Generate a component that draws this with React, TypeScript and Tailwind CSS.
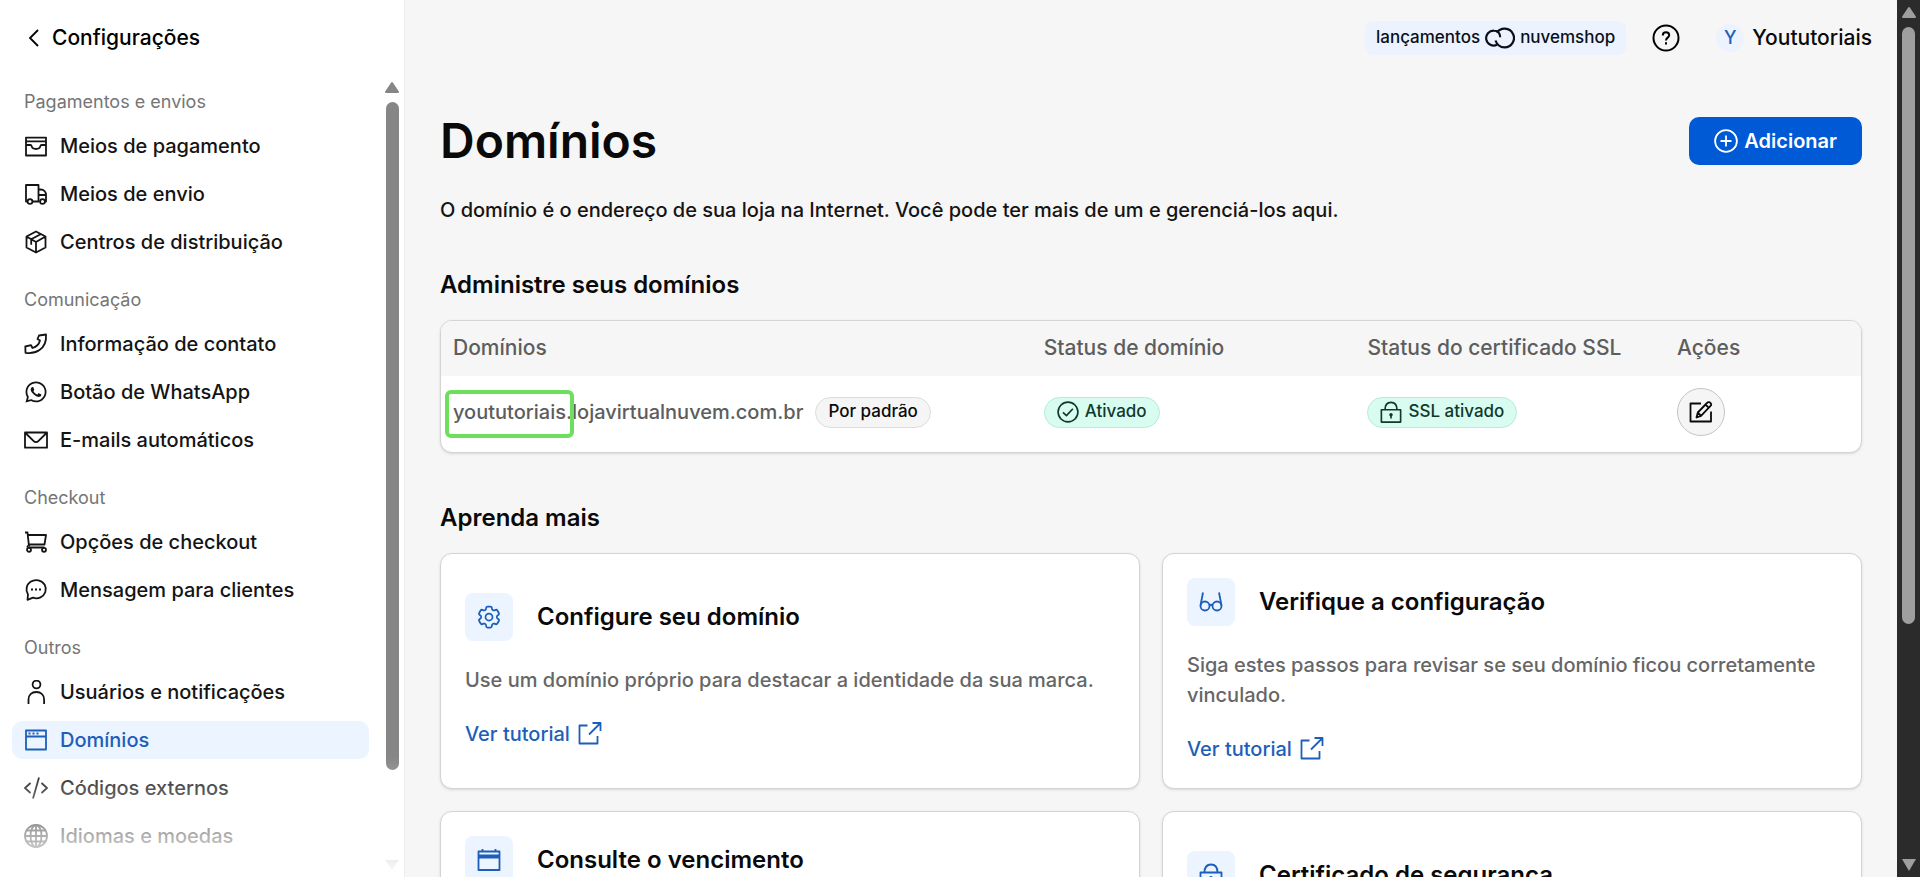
import type { ComponentType, ReactNode } from "react";
import { FaWhatsapp } from "react-icons/fa";
import { HiOutlineCog6Tooth } from "react-icons/hi2";
import clsx from "clsx";

type IconProps = { className?: string };

function Svg({ className = "size-6", children }: IconProps & { children: ReactNode }) {
  return (
    <svg
      viewBox="0 0 24 24"
      fill="none"
      stroke="currentColor"
      strokeWidth={1.8}
      strokeLinejoin="round"
      className={className}
      aria-hidden="true"
    >
      {children}
    </svg>
  );
}

const WalletIcon = (p: IconProps) => (
  <Svg {...p}>
    <path d="M2 21.5V3.6h20v17.9zM2 7.3h20M2 11h4.500c.8 0 1 .6 1.200 1.400.4 1.700 2 2.600 4.300 2.600s3.900-.9 4.300-2.600c.2-.8.4-1.400 1.200-1.400H22" />
  </Svg>
);

const TruckIcon = (p: IconProps) => (
  <Svg {...p}>
    <path d="M3.500 19.500H2V3h12.500v16.500H8.500M14.500 7.500h2c3.500 0 5.500 2.500 5.500 5.500v6.500h-1.500M15.500 19.500h-1M14.500 13H22" />
    <circle cx="6" cy="19.500" r="2.400" />
    <circle cx="18.500" cy="19.500" r="2.400" />
  </Svg>
);

const BoxIcon = (p: IconProps) => (
  <Svg {...p}>
    <path d="M12 1.500l9.500 5v11L12 22.500l-9.500-5v-11zM2.500 6.500L12 12l9.500-5.500M12 12v10.500M17 4L7.200 9.300v5.500" />
  </Svg>
);

const PhoneIcon = (p: IconProps) => (
  <Svg {...p}>
    <path d="M15 3.500L22 2.500c.6 7.500-2 12.500-6.500 15.500-4 2.800-8.500 3.500-14 2.800l-.2-6.300 5.700-1.300 1.500 2.800c3.500-1 6.500-3.500 7.500-7.500L13.500 7z" />
  </Svg>
);

const MailIcon = (p: IconProps) => (
  <Svg {...p}>
    <path d="M1 4.500h22v15.200H1zM1.500 5l8.200 8.200c1.300 1.300 3.300 1.300 4.600 0L22.500 5" />
  </Svg>
);

const CartIcon = (p: IconProps) => (
  <Svg {...p}>
    <path d="M1 2.500h2.500l1.500 13.800M4 5h18l-1.500 9.500H5L3 17.500M5 17.500h15.500" />
    <circle cx="5" cy="19.800" r="2" />
    <circle cx="20" cy="19.800" r="2" />
  </Svg>
);

const ChatIcon = (p: IconProps) => (
  <Svg {...p}>
    <path d="M3.500 21.800l.5-5.300C1.200 12 2.500 6.500 6.500 3.800c5-3.200 11.500-1.700 14.200 3 2.600 4.700.5 10.400-4.200 12.600-2.500 1.200-5 1.200-7.500.3z" />
    <path d="M7 11.500h2M11 11.500h2M15 11.500h2" />
  </Svg>
);

const UserIcon = (p: IconProps) => (
  <Svg {...p}>
    <circle cx="12.500" cy="4.500" r="3.900" />
    <path d="M4.500 24v-4.500c0-4.500 3-7.500 7.800-7.500s7.800 3 7.800 7.500V24" />
  </Svg>
);

const WindowIcon = (p: IconProps) => (
  <Svg {...p}>
    <path d="M2 2.500h20v19H2zM2 8.500h20" />
    <path d="M4.500 5.500h2M8.500 5.500h2M12.500 5.500h2" strokeWidth={2.2} />
  </Svg>
);

const CodeIcon = (p: IconProps) => (
  <Svg {...p}>
    <path d="M6.500 7L1 12l5.500 5M17.500 7l5.500 5-5.500 5M15 1.500L9 22.500" />
  </Svg>
);

const GlobeIcon = (p: IconProps) => (
  <Svg {...p}>
    <circle cx="12" cy="12" r="11" />
    <ellipse cx="12" cy="12" rx="5.500" ry="11" />
    <path d="M12 1v22M1 12h22M3 6.500h18M3 17.500h18" />
  </Svg>
);

const CalendarIcon = (p: IconProps) => (
  <Svg {...p}>
    <path d="M1.500 3.500h21v18.500h-21zM1.500 7.500h21M1.500 9.500h21M5.500 1v3M18.500 1v3" />
  </Svg>
);

const LockIcon = (p: IconProps) => (
  <Svg {...p}>
    <path d="M1.500 9.500h21V23h-21zM5.500 9.500C5.500 4.500 8 1.500 12 1.500s6.500 3 6.500 8M12 16v3" />
    <circle cx="12" cy="15" r="1" />
  </Svg>
);

const GlassesIcon = (p: IconProps) => (
  <Svg {...p}>
    <path d="M4 2.500L1.500 15.500M20 2.500l2.500 13M10.500 15.500c.8-.8 2.200-.8 3 0" />
    <circle cx="6" cy="16" r="4.500" />
    <circle cx="18" cy="16" r="4.500" />
  </Svg>
);

const ExternalIcon = (p: IconProps) => (
  <Svg {...p}>
    <path d="M9.500 3.500H1.500v18h18V14M14.500 1h8v8M22.500 1L11 12.500" />
  </Svg>
);

const EditIcon = (p: IconProps) => (
  <Svg {...p}>
    <path d="M12 3.500H1.500v18H22V11.500" />
    <path d="M7.500 17.500l1.300-5L18 3c1-1.100 2.500-1.100 3.400-.2.9.9.9 2.400-.1 3.400L12 15.800zM8.800 12.500L12 15.800M16.500 4.500l3.300 3.300" />
  </Svg>
);

const CheckCircleIcon = (p: IconProps) => (
  <Svg {...p}>
    <circle cx="12" cy="12" r="10.800" />
    <path d="M6.500 12.500l3.800 3.500 7-7.500" />
  </Svg>
);

const PlusCircleIcon = (p: IconProps) => (
  <Svg {...p}>
    <circle cx="12" cy="12" r="10.900" />
    <path d="M12 6.500v11M6.500 12h11" />
  </Svg>
);

function CloudLogo() {
  return (
    <svg viewBox="0 0 30 24" fill="none" stroke="#0a0f1a" strokeWidth={2.2} className="h-6 w-[30px]" aria-hidden="true">
      <path d="M12 18.800A7.500 7.500 0 1 1 9 4.600c3.800 0 6.200 2.700 6.200 6.700" />
      <path d="M11.800 6.700a9.400 9.400 0 1 1 7.700 14.700c-4.500 0-7.500-2.500-9-6.900" />
    </svg>
  );
}

type NavItem = { label: string; icon: ComponentType<IconProps>; active?: boolean };

const NAV: { title: string; items: NavItem[] }[] = [
  {
    title: "Pagamentos e envios",
    items: [
      { label: "Meios de pagamento", icon: WalletIcon },
      { label: "Meios de envio", icon: TruckIcon },
      { label: "Centros de distribuição", icon: BoxIcon },
    ],
  },
  {
    title: "Comunicação",
    items: [
      { label: "Informação de contato", icon: PhoneIcon },
      { label: "Botão de WhatsApp", icon: FaWhatsapp },
      { label: "E-mails automáticos", icon: MailIcon },
    ],
  },
  {
    title: "Checkout",
    items: [
      { label: "Opções de checkout", icon: CartIcon },
      { label: "Mensagem para clientes", icon: ChatIcon },
    ],
  },
  {
    title: "Outros",
    items: [
      { label: "Usuários e notificações", icon: UserIcon },
      { label: "Domínios", icon: WindowIcon, active: true },
      { label: "Códigos externos", icon: CodeIcon },
      { label: "Idiomas e moedas", icon: GlobeIcon },
    ],
  },
];

const TUTORIALS = [
  {
    title: "Configure seu domínio",
    text: "Use um domínio próprio para destacar a identidade da sua marca.",
    icon: HiOutlineCog6Tooth,
    iconClass: "size-7",
  },
  {
    title: "Verifique a configuração",
    text: "Siga estes passos para revisar se seu domínio ficou corretamente vinculado.",
    icon: GlassesIcon,
    iconClass: "size-6",
  },
  {
    title: "Consulte o vencimento",
    text: "Confira a data de vencimento do seu domínio e renove antes que ele deixe de funcionar.",
    icon: CalendarIcon,
    iconClass: "size-6",
  },
  {
    title: "Certificado de segurança",
    text: "Saiba como o certificado SSL protege a sua loja.",
    icon: LockIcon,
    iconClass: "size-6",
  },
];

function Sidebar() {
  return (
    <aside className="relative flex w-[405px] shrink-0 flex-col border-r border-[#ececec] bg-white">
      <a href="#" className="flex h-[75px] shrink-0 items-center gap-2 pl-6 text-[21px] font-medium text-black">
        <svg viewBox="0 0 20 20" fill="none" stroke="currentColor" strokeWidth={1.8} className="size-5" aria-hidden="true">
          <path d="M14 2L6 10l8 8" />
        </svg>
        Configurações
      </a>

      <div className="flex min-h-0 flex-1">
        <nav className="flex flex-1 flex-col gap-[27px] overflow-hidden pt-[15px] pr-[15px] pl-3">
          {NAV.map((group) => (
            <section key={group.title}>
              <h2 className="mb-[13px] pl-3 text-lg leading-6 text-[#757575]">{group.title}</h2>
              <ul className="flex flex-col gap-2.5">
                {group.items.map(({ label, icon: Icon, active }) => (
                  <li key={label}>
                    <a
                      href="#"
                      className={clsx(
                        "flex h-[38px] items-center gap-3 rounded-[10px] px-3 text-xl font-medium",
                        active ? "bg-[#ebf4ff] text-[#1d5fb8]" : "text-[#141414]",
                      )}
                    >
                      <Icon className="size-6 shrink-0" />
                      {label}
                    </a>
                  </li>
                ))}
              </ul>
            </section>
          ))}
        </nav>
        <div className="flex w-5 flex-col items-center py-1.5 pr-1">
          <svg viewBox="0 0 14 12" className="h-3 w-3.5" fill="#868686" stroke="#868686" strokeWidth={2} strokeLinejoin="round" aria-hidden="true">
            <path d="M7 2L13 11H1z" />
          </svg>
          <div className="mt-[9px] h-[84.5%] w-[13px] rounded-full bg-[#868686]" />
          <svg viewBox="0 0 14 12" className="mt-auto h-3 w-3.5" fill="#868686" aria-hidden="true">
            <path d="M0 1h14L7 11z" />
          </svg>
        </div>
      </div>
      <div className="pointer-events-none absolute inset-x-0 bottom-0 h-[120px] bg-linear-to-b from-white/0 to-white" />
    </aside>
  );
}

function TopBar() {
  return (
    <header className="flex h-[75px] shrink-0 items-center justify-end pr-[25px]">
      <a href="#" className="flex h-[34px] items-center gap-[5px] rounded-lg bg-[#ecf3fe] px-[11px] text-[17px] font-medium text-[#0a0f1a]">
        lançamentos
        <CloudLogo />
        nuvemshop
      </a>
      <button type="button" aria-label="Ajuda" className="ml-[26px] text-black">
        <svg viewBox="0 0 28 28" fill="none" stroke="currentColor" strokeWidth={2} className="size-7" aria-hidden="true">
          <circle cx="14" cy="14" r="12.500" />
          <path d="M10.800 11.500c0-2 1.300-3.200 3.200-3.200s3.200 1.200 3.200 2.900c0 2.400-3.200 2.500-3.200 5.300M14 18.300v2.200" />
        </svg>
      </button>
      <button type="button" className="ml-9 flex items-center gap-2 text-[21px] font-medium text-[#0a0a0a]">
        <span className="flex size-7 items-center justify-center rounded-full bg-[#ecf3fe] text-lg text-[#1d5fb8]">Y</span>
        Yoututoriais
      </button>
    </header>
  );
}

function Tag({ children, success }: { children: ReactNode; success?: boolean }) {
  return (
    <span
      className={clsx(
        "flex h-[31px] w-fit items-center gap-1.5 rounded-full border px-3 text-[17px] font-medium",
        success ? "border-[#b4ecd9] bg-[#d9fcf0] text-[#10392d]" : "border-[#dcdcdc] bg-[#f5f5f5] text-[#0a0a0a]",
      )}
    >
      {children}
    </span>
  );
}

function DomainTable() {
  return (
    <div className="overflow-hidden rounded-xl border border-[#d4d4d4] bg-white shadow-sm">
      <table className="w-full table-fixed text-left text-xl text-[#5d5d5d]">
        <thead className="bg-[#f6f6f6] text-[21px]">
          <tr className="h-[55px]">
            <th className="w-[41.6%] px-3 pb-0.5 font-medium">Domínios</th>
            <th className="w-[22.8%] px-3 pb-0.5 font-medium">Status de domínio</th>
            <th className="w-[21.8%] px-3 pb-0.5 font-medium">Status do certificado SSL</th>
            <th className="px-3 pb-0.5 font-medium">Ações</th>
          </tr>
        </thead>
        <tbody>
          <tr className="h-[76px]">
            <td className="px-3 pb-1">
              <div className="flex items-center gap-3">
                <span className="relative font-medium">
                  yoututoriais.lojavirtualnuvem.com.br
                  <span className="absolute -top-2 -left-2 h-12 w-[129px] rounded-md border-4 border-[#6ddf5e]" />
                </span>
                <Tag>Por padrão</Tag>
              </div>
            </td>
            <td className="px-3 pb-1">
              <Tag success>
                <CheckCircleIcon className="size-[22px]" />
                Ativado
              </Tag>
            </td>
            <td className="px-3 pb-1">
              <Tag success>
                <LockIcon className="size-[22px]" />
                SSL ativado
              </Tag>
            </td>
            <td className="px-3 pb-1">
              <button
                type="button"
                aria-label="Editar domínio"
                className="flex size-12 items-center justify-center rounded-full border border-[#c4c4c4] bg-[#f5f5f5] text-[#0a0a0a]"
              >
                <EditIcon />
              </button>
            </td>
          </tr>
        </tbody>
      </table>
    </div>
  );
}

function PageScrollbar() {
  return (
    <div className="flex w-[23px] shrink-0 flex-col items-center bg-[#2b2b2b] py-1.5">
      <svg viewBox="0 0 14 12" className="h-3 w-3.5" fill="#9f9f9f" stroke="#9f9f9f" strokeWidth={2} strokeLinejoin="round" aria-hidden="true">
        <path d="M7 2L13 11H1z" />
      </svg>
      <div className="mt-[9px] h-[69%] w-[13px] rounded-full bg-[#9f9f9f]" />
      <svg viewBox="0 0 14 12" className="mt-auto h-3 w-3.5" fill="#9f9f9f" aria-hidden="true">
        <path d="M0 0h14L7 12z" />
      </svg>
    </div>
  );
}

export default function App() {
  return (
    <div className="flex h-screen overflow-hidden bg-[#f6f6f6] font-[Inter,'Liberation_Sans',sans-serif]">
      <Sidebar />

      <div className="flex min-w-0 flex-1 flex-col">
        <TopBar />
        <main className="min-h-0 flex-1 overflow-hidden px-[35px] pt-9">
          <div className="flex items-center justify-between">
            <h1 className="text-5xl leading-[60px] font-semibold text-[#0a0a0a]">Domínios</h1>
            <button
              type="button"
              className="flex h-12 items-center gap-1.5 rounded-[10px] bg-[#0059d5] px-[25px] text-xl font-semibold text-white"
            >
              <PlusCircleIcon />
              Adicionar
            </button>
          </div>

          <p className="mt-6 text-xl leading-[30px] font-medium text-[#141414]">
            O domínio é o endereço de sua loja na Internet. Você pode ter mais de um e gerenciá-los aqui.
          </p>

          <h2 className="mt-11 mb-[19px] text-2xl font-semibold text-[#0a0a0a]">Administre seus domínios</h2>
          <DomainTable />

          <h2 className="mt-[49px] mb-[19px] text-2xl font-semibold text-[#0a0a0a]">Aprenda mais</h2>
          <div className="grid grid-cols-2 gap-[22px]">
            {TUTORIALS.map(({ title, text, icon: Icon, iconClass }) => (
              <article
                key={title}
                className="flex flex-col justify-center gap-6 rounded-xl border border-[#d4d4d4] bg-white p-6 shadow-sm"
              >
                <div className="flex items-center gap-6">
                  <span className="flex size-12 items-center justify-center rounded-lg bg-[#ebf4ff] text-[#1d5fb8]">
                    <Icon className={iconClass} />
                  </span>
                  <h3 className="text-2xl font-semibold text-[#0a0a0a]">{title}</h3>
                </div>
                <p className="text-xl leading-[30px] font-medium text-[#666]">{text}</p>
                <a href="#" className="flex h-[30px] items-center gap-2 self-start text-xl font-medium text-[#1d5fb8]">
                  Ver tutorial
                  <ExternalIcon />
                </a>
              </article>
            ))}
          </div>
        </main>
      </div>

      <PageScrollbar />
    </div>
  );
}
